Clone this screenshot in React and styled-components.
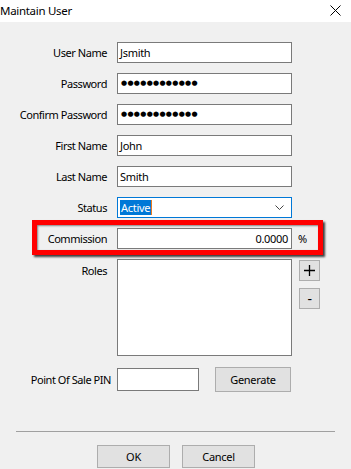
import React from "react";
import styled, { createGlobalStyle } from "styled-components";

const Global = createGlobalStyle`
  html, body { margin: 0; padding: 0; background: #f0f0f0; }
  body { font-family: "Noto Sans", "Segoe UI", sans-serif; font-size: 11px; letter-spacing: -0.45px; color: #000; }
  * { box-sizing: border-box; }
`;

const Window = styled.div`
  width: 351px;
  height: 469px;
  background: #f0f0f0;
  overflow: hidden;
  display: flex;
  flex-direction: column;
`;

const TitleBar = styled.div`
  height: 22px;
  background: #fff;
  display: flex;
  align-items: center;
  justify-content: space-between;
  padding: 0 5px 0 0;
  font-size: 11.5px;
  letter-spacing: -0.3px;
  color: #000;
`;

const TitleText = styled.span`
  padding-bottom: 2px;
`;

const CloseIcon = styled.svg`
  width: 11px;
  height: 11px;
  margin-right: 5px;
  margin-bottom: 1px;
`;

const Form = styled.div`
  display: flex;
  flex-direction: column;
  gap: 10px;
  padding-top: 20px;
`;

const Row = styled.div`
  position: relative;
  display: flex;
  align-items: ${(p) => (p.$top ? "flex-start" : "center")};
  margin-top: ${(p) => p.$mt || 0}px;
`;

const Label = styled.div`
  width: 117px;
  padding-right: ${(p) => (p.$pr != null ? p.$pr : 10)}px;
  padding-top: ${(p) => p.$pt || 0}px;
  text-align: right;
  white-space: nowrap;
  color: #000;
`;

const Field = styled.div`
  width: ${(p) => p.$w || 175}px;
  height: ${(p) => p.$h || 21}px;
  background: #fff;
  border: 1px solid ${(p) => (p.$focus ? "#0078d7" : "#7a7a7a")};
  display: flex;
  align-items: center;
  justify-content: ${(p) => (p.$right ? "flex-end" : "flex-start")};
  padding: 0 ${(p) => (p.$right ? 3 : 2)}px 0 2px;
  white-space: nowrap;
  overflow: hidden;
  letter-spacing: -0.3px;
`;

const Dots = styled.span`
  font-family: "DejaVu Sans", sans-serif;
  font-size: 7px;
  letter-spacing: 0.3px;
  padding-left: 1px;
  line-height: 1;
`;

const Selected = styled.span`
  background: #0078d7;
  color: #fff;
  padding: 0 1px;
  line-height: 15px;
  border-right: 1px solid #e87a20;
`;

const Chevron = styled.svg`
  margin-left: auto;
  margin-right: 5px;
  width: 9px;
  height: 6px;
`;

const Suffix = styled.span`
  margin-left: 6px;
`;

const Highlight = styled.div`
  position: absolute;
  left: 32px;
  top: -8px;
  width: 291px;
  height: 35px;
  border: 5px solid #ff0000;
  box-shadow: 2px 2px 2px rgba(0, 0, 0, 0.75), inset 1px 1px 2px rgba(0, 0, 0, 0.45);
  pointer-events: none;
`;

const SideButtons = styled.div`
  display: flex;
  flex-direction: column;
  gap: 7px;
  margin-left: 7px;
  margin-top: 1px;
`;

const Button = styled.button`
  width: ${(p) => p.$w}px;
  height: ${(p) => p.$h}px;
  background: #e1e1e1;
  border: 1px solid #adadad;
  font-family: "Noto Sans", sans-serif;
  font-size: ${(p) => p.$fs || 11}px;
  letter-spacing: -0.3px;
  color: #000;
  padding: 0;
  margin-left: ${(p) => p.$ml || 0}px;
  display: flex;
  align-items: center;
  justify-content: center;
  line-height: 1;
`;

const Separator = styled.div`
  height: 1px;
  background: #a0a0a0;
  margin: 39px 16px 0 16px;
`;

const Footer = styled.div`
  display: flex;
  justify-content: center;
  gap: 12px;
  margin-top: 13px;
  padding-left: 1px;
`;

const Plus = () => (
  <svg width="11" height="11" viewBox="0 0 11 11">
    <path d="M5.5 0v11M0 5.5h11" stroke="#000" strokeWidth="1.3" />
  </svg>
);

export default function App() {
  return (
    <Window>
      <Global />
      <TitleBar>
        <TitleText>Maintain User</TitleText>
        <CloseIcon viewBox="0 0 11 11">
          <path d="M0.5 0.5L10.5 10.5M10.5 0.5L0.5 10.5" stroke="#000" strokeWidth="1" />
        </CloseIcon>
      </TitleBar>
      <Form>
        <Row>
          <Label>User Name</Label>
          <Field>Jsmith</Field>
        </Row>
        <Row>
          <Label>Password</Label>
          <Field>
            <Dots>●●●●●●●●●●●●</Dots>
          </Field>
        </Row>
        <Row>
          <Label>Confirm Password</Label>
          <Field>
            <Dots>●●●●●●●●●●●●</Dots>
          </Field>
        </Row>
        <Row>
          <Label>First Name</Label>
          <Field>John</Field>
        </Row>
        <Row>
          <Label>Last Name</Label>
          <Field>Smith</Field>
        </Row>
        <Row>
          <Label>Status</Label>
          <Field $focus>
            <Selected>Active</Selected>
            <Chevron viewBox="0 0 9 6">
              <path d="M0.5 0.5L4.5 4.5L8.5 0.5" stroke="#444" strokeWidth="1" fill="none" />
            </Chevron>
          </Field>
        </Row>
        <Row>
          <Highlight />
          <Label>Commission</Label>
          <Field $right>0.0000</Field>
          <Suffix>%</Suffix>
        </Row>
        <Row $top>
          <Label $pt={4}>Roles</Label>
          <Field $h={97} />
          <SideButtons>
            <Button $w={21} $h={21} $fs={16}>
              <Plus />
            </Button>
            <Button $w={21} $h={21} $fs={14}>
              -
            </Button>
          </SideButtons>
        </Row>
        <Row $mt={1}>
          <Label $pr={6}>Point Of Sale PIN</Label>
          <Field $w={82} $h={23} />
          <Button $w={76} $h={25} $ml={16}>
            Generate
          </Button>
        </Row>
      </Form>
      <Separator />
      <Footer>
        <Button $w={73} $h={23}>OK</Button>
        <Button $w={73} $h={23}>Cancel</Button>
      </Footer>
    </Window>
  );
}
